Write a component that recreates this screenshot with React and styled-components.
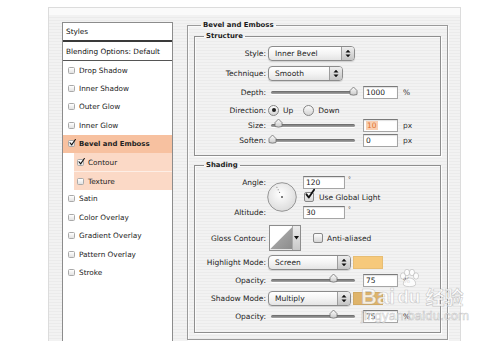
import React from "react";
import styled, { createGlobalStyle } from "styled-components";

const GlobalStyle = createGlobalStyle`
  html, body { margin: 0; background: #fff; }
  body {
    font-family: "DejaVu Sans", "Liberation Sans", sans-serif;
    font-size: 7.5px;
    color: #1d1d1d;
  }
`;

const Page = styled.div`
  position: relative;
  width: 500px;
  height: 345px;
  overflow: hidden;
  padding-top: 7px;
  box-sizing: border-box;
`;

const Frame = styled.div`
  box-sizing: border-box;
  width: 413px;
  height: 334px;
  margin-left: 48px;
  border: 1px solid #dcdcdc;
  border-bottom: none;
  background: #fafafa;
  display: flex;
  flex-direction: column;
  overflow: hidden;
`;

const Sheet = styled.div`
  flex: 1;
  margin-top: 7px;
  display: flex;
  gap: 14px;
  padding: 5px 12px 1px 13px;
  background: repeating-linear-gradient(
    to bottom,
    #f2f2f2 0px,
    #f2f2f2 2px,
    #ebebeb 2px,
    #ebebeb 3px
  );
`;

/* ---------- left styles list ---------- */

const StyleList = styled.div`
  box-sizing: border-box;
  width: 111px;
  flex: none;
  margin-top: 2px;
  margin-bottom: -1px;
  background: #fff;
  border: 1px solid #8c8c8c;
  border-bottom: none;
  display: flex;
  flex-direction: column;
  font-size: 7.3px;
`;

const ListHead = styled.div`
  box-sizing: border-box;
  height: ${(p) => p.$h}px;
  flex: none;
  display: flex;
  align-items: center;
  padding-left: 3px;
  border-bottom: ${(p) => p.$line};
  color: #111;
`;

const Item = styled.div`
  box-sizing: border-box;
  height: 18.4px;
  flex: none;
  display: flex;
  align-items: center;
  gap: 4px;
  margin-left: ${(p) => (p.$sub ? 11 : 0)}px;
  padding-left: ${(p) => (p.$sub ? 3 : 5)}px;
  background: ${(p) =>
    p.$active ? "#f7c1a0" : p.$sub ? "#fbd9c6" : "transparent"};
  border-top: ${(p) => (p.$split ? "1px solid #fdeee5" : "none")};
  font-weight: ${(p) => (p.$active ? 700 : 400)};
  font-size: ${(p) => (p.$active ? "6.9px" : "7.3px")};
  color: #222;
`;

const ListBox = styled.span`
  position: relative;
  flex: none;
  box-sizing: border-box;
  width: 7px;
  height: 7px;
  border: 1px solid #a9a9a9;
  border-radius: 1.5px;
  background: linear-gradient(#ffffff, #e2e2e2);
`;

const Mark = styled.svg`
  position: absolute;
  left: ${(p) => p.$x}px;
  top: ${(p) => p.$y}px;
  overflow: visible;
`;

const CheckMark = ({ x = -1, y = -3, s = 9, w = 1.7 }) => (
  <Mark $x={x} $y={y} width={s} height={s} viewBox="0 0 9 9">
    <path
      d="M1.3 4.8 L3.4 7.6 L8.2 0.6"
      fill="none"
      stroke="#111"
      strokeWidth={w}
      strokeLinecap="round"
      strokeLinejoin="round"
    />
  </Mark>
);

/* ---------- right group boxes ---------- */

const Group = styled.fieldset`
  box-sizing: border-box;
  min-width: 0;
  margin: ${(p) => p.$mt || 0}px 0 0;
  padding: ${(p) => p.$pad};
  border: 1px solid ${(p) => p.$line};
  box-shadow: 1px 1px 0 rgba(255, 255, 255, 0.9),
    inset 1px 1px 0 rgba(255, 255, 255, 0.7);
`;

const Outer = styled(Group)`
  width: 261px;
  flex: none;
`;

const Title = styled.legend`
  margin-left: ${(p) => p.$ml}px;
  padding: 0 2px;
  font-weight: 700;
  font-size: 6.9px;
  line-height: 10px;
  color: #1a1a1a;
`;

const Row = styled.div`
  display: grid;
  grid-template-columns: 71px auto;
  column-gap: 2px;
  align-items: center;
  justify-content: start;
  height: ${(p) => p.$h}px;
  margin-top: ${(p) => p.$mt || 0}px;
`;

const Label = styled.span`
  text-align: right;
  white-space: nowrap;
  color: #222;
`;

const Controls = styled.div`
  display: flex;
  align-items: center;
  gap: ${(p) => (p.$gap === undefined ? 4 : p.$gap)}px;
  white-space: nowrap;
`;

const Select = styled.div`
  box-sizing: border-box;
  width: ${(p) => p.$w}px;
  height: 15px;
  display: flex;
  align-items: center;
  border: 1px solid #8b8b8b;
  border-radius: 4px;
  background: linear-gradient(#ffffff, #f4f4f4 50%, #e4e4e4);
  box-shadow: 0 1px 1px rgba(0, 0, 0, 0.14);
  overflow: hidden;
`;

const SelectText = styled.span`
  flex: 1;
  padding-left: 6px;
`;

const Stepper = styled.span`
  width: 12px;
  align-self: stretch;
  display: flex;
  align-items: center;
  justify-content: center;
  border-left: 1px solid #9d9d9d;
  background: linear-gradient(#eeeeee, #c4c4c4);
`;

const Popup = ({ w, children }) => (
  <Select $w={w}>
    <SelectText>{children}</SelectText>
    <Stepper>
      <svg width="6" height="9" viewBox="0 0 6 9">
        <path d="M0.5 3.5 L3 0.8 L5.5 3.5 Z M0.5 5.5 L3 8.2 L5.5 5.5 Z" fill="#111" />
      </svg>
    </Stepper>
  </Select>
);

const SliderWrap = styled.div`
  position: relative;
  width: 90px;
  height: 12px;
  display: flex;
  align-items: center;
`;

const Track = styled.div`
  flex: 1;
  margin: 0 3px;
  height: 3px;
  border-radius: 2px;
  background: linear-gradient(#666, #a8a8a8);
  box-shadow: 0 1px 0 #fff;
`;

const Thumb = styled.svg`
  position: absolute;
  top: -1px;
`;

const Slider = ({ value }) => (
  <SliderWrap>
    <Track />
    <Thumb width="9" height="10" viewBox="0 0 9 10" style={{ left: value * 81 }}>
      <defs>
        <linearGradient id="thumbFill" x1="0" y1="0" x2="0" y2="1">
          <stop offset="0" stopColor="#ffffff" />
          <stop offset="1" stopColor="#c9c9c9" />
        </linearGradient>
      </defs>
      <path
        d="M1 8.5 V4.6 L4.5 1 L8 4.6 V8.5 Q4.5 9.8 1 8.5 Z"
        fill="url(#thumbFill)"
        stroke="#6e6e6e"
        strokeWidth="0.8"
      />
    </Thumb>
  </SliderWrap>
);

const Field = styled.div`
  box-sizing: border-box;
  width: ${(p) => p.$w}px;
  height: 13px;
  padding-left: 2px;
  display: flex;
  align-items: center;
  background: #fff;
  border: 1px solid #a5a5a5;
  border-top-color: #7a7a7a;
  box-shadow: inset 0 1px 1px rgba(0, 0, 0, 0.12);
  color: #222;
`;

const Selected = styled.span`
  background: #f8cfb2;
  color: #e2712c;
  padding: 0 1px;
`;

const Unit = styled.span`
  color: #333;
`;

const Degree = styled.span`
  align-self: flex-start;
  margin-top: -1px;
  font-size: 6px;
  color: #333;
`;

const Radio = styled.span`
  flex: none;
  box-sizing: border-box;
  width: 11px;
  height: 11px;
  border-radius: 50%;
  border: 1px solid #858585;
  background: linear-gradient(#fbfbfb, #d4d4d4);
  display: flex;
  align-items: center;
  justify-content: center;
  &::after {
    content: "";
    width: 4px;
    height: 4px;
    border-radius: 50%;
    background: ${(p) => (p.$on ? "#1e1e1e" : "transparent")};
  }
`;

const Option = styled.span`
  display: flex;
  align-items: center;
  gap: 4px;
`;

const Check = styled.span`
  position: relative;
  flex: none;
  box-sizing: border-box;
  width: 10px;
  height: 10px;
  border: 1px solid #888;
  border-radius: 2px;
  background: linear-gradient(#fcfcfc, #d6d6d6);
  margin-left: ${(p) => p.$ml || 0}px;
`;

const AngleGrid = styled.div`
  display: grid;
  grid-template-columns: 71px 37px auto;
  grid-template-rows: 16px 14px 16px;
  column-gap: 0;
  align-items: center;
  justify-content: start;
  margin-top: 4px;
`;

const AngleLabel = styled(Label)`
  grid-column: 1;
  grid-row: ${(p) => p.$row};
`;

const DialCell = styled.div`
  grid-column: 2;
  grid-row: 1 / 4;
  padding-left: 1px;
  display: flex;
  align-items: center;
`;

const AngleCell = styled(Controls)`
  grid-column: 3;
  grid-row: ${(p) => p.$row};
`;

const Contour = styled.div`
  box-sizing: border-box;
  display: flex;
  width: 32px;
  height: 26px;
  margin-left: 1px;
  border: 1px solid #8d8d8d;
  background: #fff;
`;

const ContourArrow = styled.span`
  width: 7px;
  display: flex;
  align-items: center;
  justify-content: center;
  border-left: 1px solid #a9a9a9;
  background: linear-gradient(#ececec, #c8c8c8);
`;

const Swatch = styled.span`
  box-sizing: border-box;
  width: 30px;
  height: 13px;
  margin-left: -2px;
  background: ${(p) => p.$c};
  border: 1px solid rgba(0, 0, 0, 0.06);
`;

/* ---------- watermark ---------- */

const Watermark = styled.div`
  position: absolute;
  left: 361px;
  top: 269px;
  pointer-events: none;
  font-family: "Liberation Sans", sans-serif;
  color: rgba(255, 255, 255, 0.8);
  -webkit-text-stroke: 0.6px rgba(150, 150, 150, 0.5);
`;

const MarkLine = styled.div`
  display: flex;
  align-items: flex-end;
  gap: 2px;
  font-weight: 700;
  font-size: 22px;
  line-height: 20px;
`;

const Du = styled.span`
  display: flex;
  flex-direction: column;
  align-items: center;
  font-size: 19px;
`;

const Cjk = styled.span`
  margin-left: 3px;
  font-family: "Noto Sans CJK SC", sans-serif;
  font-size: 19px;
`;

const Site = styled.div`
  margin-top: 2px;
  font-size: 13px;
  line-height: 13px;
  letter-spacing: 0.2px;
`;

const effects = [
  { name: "Drop Shadow" },
  { name: "Inner Shadow" },
  { name: "Outer Glow" },
  { name: "Inner Glow" },
  { name: "Bevel and Emboss", on: true, active: true },
  { name: "Contour", on: true, sub: true },
  { name: "Texture", sub: true, split: true },
  { name: "Satin" },
  { name: "Color Overlay" },
  { name: "Gradient Overlay" },
  { name: "Pattern Overlay" },
  { name: "Stroke" },
];

const Dial = () => (
  <svg width="30" height="30" viewBox="0 0 30 30">
    <defs>
      <radialGradient id="dialFill" cx="0.45" cy="0.4" r="0.65">
        <stop offset="0" stopColor="#ffffff" />
        <stop offset="1" stopColor="#d9d9d9" />
      </radialGradient>
    </defs>
    <circle cx="15" cy="15" r="14.3" fill="url(#dialFill)" stroke="#8c8c8c" strokeWidth="0.9" />
    <circle cx="12.6" cy="10.4" r="0.55" fill="#777" />
    <circle cx="11.2" cy="7.8" r="0.55" fill="#777" />
    <circle cx="9.9" cy="5.3" r="0.55" fill="#777" />
    <circle cx="15" cy="15" r="1" fill="#555" />
  </svg>
);

export default function App() {
  return (
    <Page>
      <GlobalStyle />
      <Frame>
        <Sheet>
          <StyleList>
            <ListHead $h={19} $line="2px solid #3a3a3a">Styles</ListHead>
            <ListHead $h={19} $line="1px solid #555">Blending Options: Default</ListHead>
            {effects.map((e) => (
              <Item key={e.name} $active={e.active} $sub={e.sub} $split={e.split}>
                <ListBox>{e.on && <CheckMark x={-0.5} y={-2} s={7} w={1.4} />}</ListBox>
                {e.name}
              </Item>
            ))}
          </StyleList>

          <Outer $line="#9a9a9a" $pad="0 6px 0 6px">
            <Title $ml={7}>Bevel and Emboss</Title>

            <Group $line="#8e8e8e" $pad="2px 0 6px 0" $mt={1}>
              <Title $ml={9}>Structure</Title>
              <Row $h={20}>
                <Label>Style:</Label>
                <Popup w={87}>Inner Bevel</Popup>
              </Row>
              <Row $h={20}>
                <Label>Technique:</Label>
                <Popup w={75}>Smooth</Popup>
              </Row>
              <Row $h={19}>
                <Label>Depth:</Label>
                <Controls $gap={5}>
                  <Slider value={1} />
                  <Field $w={35}>1000</Field>
                  <Unit>%</Unit>
                </Controls>
              </Row>
              <Row $h={16}>
                <Label>Direction:</Label>
                <Controls $gap={10}>
                  <Option>
                    <Radio $on />
                    Up
                  </Option>
                  <Option>
                    <Radio />
                    Down
                  </Option>
                </Controls>
              </Row>
              <Row $h={14}>
                <Label>Size:</Label>
                <Controls $gap={5}>
                  <Slider value={0.08} />
                  <Field $w={35}>
                    <Selected>10</Selected>
                  </Field>
                  <Unit>px</Unit>
                </Controls>
              </Row>
              <Row $h={17}>
                <Label>Soften:</Label>
                <Controls $gap={5}>
                  <Slider value={0} />
                  <Field $w={35}>0</Field>
                  <Unit>px</Unit>
                </Controls>
              </Row>
            </Group>

            <Group $line="#8e8e8e" $pad="0 0 7px 0" $mt={4}>
              <Title $ml={9}>Shading</Title>
              <AngleGrid>
                <AngleLabel $row={1}>Angle:</AngleLabel>
                <AngleLabel $row={3}>Altitude:</AngleLabel>
                <DialCell>
                  <Dial />
                </DialCell>
                <AngleCell $row={1} $gap={3}>
                  <Field $w={42}>120</Field>
                  <Degree>°</Degree>
                </AngleCell>
                <AngleCell $row={2} $gap={5}>
                  <Check $ml={1}>
                    <CheckMark x={0} y={-4} s={10} />
                  </Check>
                  Use Global Light
                </AngleCell>
                <AngleCell $row={3} $gap={3}>
                  <Field $w={42}>30</Field>
                  <Degree>°</Degree>
                </AngleCell>
              </AngleGrid>

              <Row $h={26} $mt={5}>
                <Label>Gloss Contour:</Label>
                <Controls $gap={12}>
                  <Contour>
                    <svg width="24" height="24" viewBox="0 0 24 24">
                      <defs>
                        <linearGradient id="contourFill" x1="0" y1="0" x2="1" y2="1">
                          <stop offset="0" stopColor="#b4b4b4" />
                          <stop offset="1" stopColor="#8c8c8c" />
                        </linearGradient>
                      </defs>
                      <path d="M0 24 L24 0 L24 24 Z" fill="url(#contourFill)" />
                    </svg>
                    <ContourArrow>
                      <svg width="5" height="4" viewBox="0 0 5 4">
                        <path d="M0 0 H5 L2.5 3.6 Z" fill="#111" />
                      </svg>
                    </ContourArrow>
                  </Contour>
                  <Option>
                    <Check />
                    Anti-aliased
                  </Option>
                </Controls>
              </Row>

              <Row $h={18} $mt={2}>
                <Label>Highlight Mode:</Label>
                <Controls>
                  <Popup w={83}>Screen</Popup>
                  <Swatch $c="#f6c97b" />
                </Controls>
              </Row>
              <Row $h={18}>
                <Label>Opacity:</Label>
                <Controls $gap={5}>
                  <Slider value={0.75} />
                  <Field $w={35}>75</Field>
                  <Unit>%</Unit>
                </Controls>
              </Row>
              <Row $h={18}>
                <Label>Shadow Mode:</Label>
                <Controls>
                  <Popup w={83}>Multiply</Popup>
                  <Swatch $c="#dfb46a" />
                </Controls>
              </Row>
              <Row $h={18}>
                <Label>Opacity:</Label>
                <Controls $gap={5}>
                  <Slider value={0.75} />
                  <Field $w={35}>75</Field>
                  <Unit>%</Unit>
                </Controls>
              </Row>
            </Group>
          </Outer>
        </Sheet>
      </Frame>

      <Watermark>
        <MarkLine>
          <span>Bai</span>
          <Du>
            <svg width="22" height="18" viewBox="0 0 22 18">
              <g fill="rgba(255,255,255,0.8)" stroke="rgba(150,150,150,0.5)" strokeWidth="0.8">
                <ellipse cx="5" cy="7" rx="2.6" ry="3.2" />
                <ellipse cx="9" cy="3.5" rx="2.6" ry="3.2" />
                <ellipse cx="14" cy="3.5" rx="2.6" ry="3.2" />
                <ellipse cx="18" cy="7" rx="2.6" ry="3.2" />
                <path d="M11.5 9 C7 9 4 14 6 16.5 C8 18 15 18 17 16.5 C19 14 16 9 11.5 9 Z" />
              </g>
            </svg>
            <span>du</span>
          </Du>
          <Cjk>经验</Cjk>
        </MarkLine>
        <Site>jingyan.baidu.com</Site>
      </Watermark>
    </Page>
  );
}
